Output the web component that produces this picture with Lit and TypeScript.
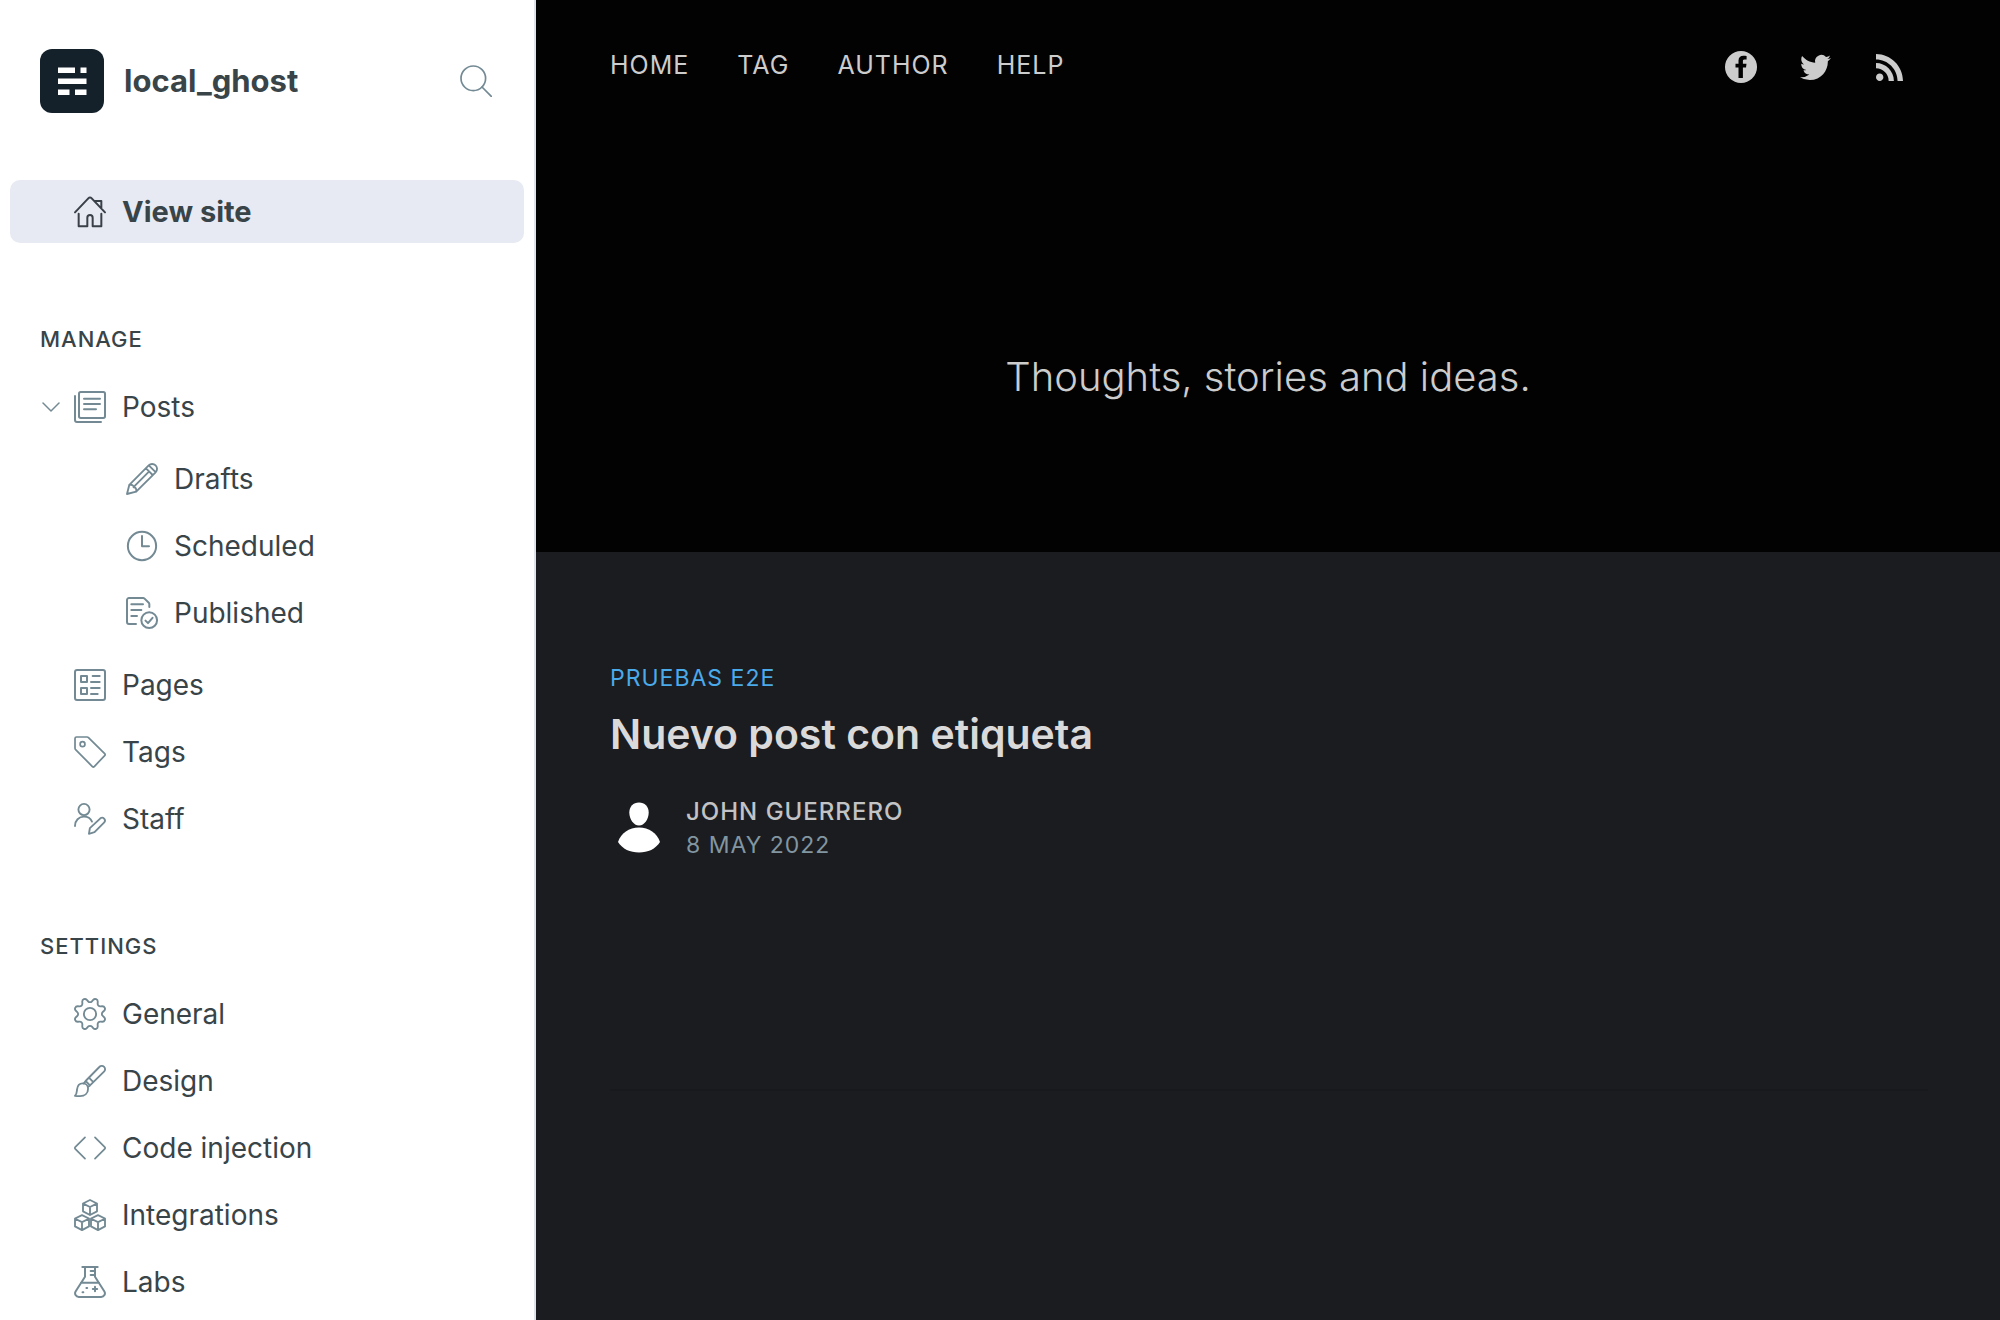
import { LitElement, html, svg, css, type SVGTemplateResult } from "lit";
import { customElement, property, state } from "lit/decorators.js";

const cube = (x: number, y: number) => svg`
  <path d="M12 .75l5.25 2.6v5.9L12 12l-5.25-2.75v-5.9zM6.9 3.5L12 6l5.1-2.5M12 6v6" transform="translate(${x} ${y})"/>`;

const ICONS: Record<string, SVGTemplateResult> = {
  home: svg`<path d="M.75 12.25L10.9 1.6a1.5 1.5 0 0 1 2.2 0l10.15 10.65M15.8 3.75h4.7v5M3.5 13.25v9.5H10v-6.5a2 2 0 0 1 4 0v6.5h6.5v-9.5"/>`,
  posts: svg`<rect x="3.75" y=".75" width="19.5" height="19.5" rx="1.3"/>
    <path d="M.75 3.75v18a1.5 1.5 0 0 0 1.5 1.5h18M7.5 5.75h12M7.5 9.75h12M7.5 13.75h9"/>`,
  drafts: svg`<g stroke-width="1.4"><path d="M22.2 1.8a3.64 3.64 0 0 0-5.2 0L2.5 16.35.75 23.25l6.9-1.75L22.2 7a3.64 3.64 0 0 0 0-5.2zM15 4l5 5M17.3 2l4.7 4.7M2.5 16.35c2.3-.2 3.3.4 3.2 1.9 1.5-.1 2.2 1 2 3.2M5.8 17.9L17.2 6.5"/></g>`,
  scheduled: svg`<circle cx="12" cy="12" r="10.6"/><path d="M12 4.5v7.75h5.25"/>`,
  published: svg`<path d="M7.5 20.25H2.25a1.5 1.5 0 0 1-1.5-1.5V2.25a1.5 1.5 0 0 1 1.5-1.5h10.6a1.5 1.5 0 0 1 1.06.44l3.15 3.15a1.5 1.5 0 0 1 .44 1.06V7.5M4 5.5h8.75M4 9.75h7.5M4 14.2h4.25"/>
    <circle cx="17.4" cy="17.4" r="5.9"/><path d="M14.6 17.7l1.9 1.9 3.4-4"/>`,
  pages: svg`<rect x=".75" y=".75" width="22.5" height="22.5" rx="1.5"/>
    <rect x="5.25" y="5.25" width="4.5" height="4.5"/><rect x="5.25" y="14.25" width="4.5" height="4.5"/>
    <path d="M14 5.25h5.25M12.75 9.75h6.5M12.75 14.25h6.5M12.75 18.75h5"/>`,
  tags: svg`<g stroke-width="1.3"><path d="M1.9.75h7.9a1.5 1.5 0 0 1 1.06.44L23 13.3a1 1 0 0 1 0 1.4L15.2 22.9a1 1 0 0 1-1.4 0L1.2 10.3a1.5 1.5 0 0 1-.44-1.06V1.9A1.15 1.15 0 0 1 1.9.75z"/>
    <circle cx="6.4" cy="6.1" r="1.8"/></g>`,
  staff: svg`<g stroke-width="1.4"><circle cx="7.5" cy="4.9" r="4.2"/><path d="M.75 17.25c0-4.2 2.9-7 6.75-7 2.7 0 4.9 1.3 6 3.7M15.4 21.9l-4.2 1.2.7-4.3 7.9-7.3a2.1 2.1 0 0 1 2.9 3z"/></g>`,
  general: svg`<g stroke-width="1.4"><path d="M10.546 2.438a1.957 1.957 0 0 0 2.908 0L14.4 1.4a1.959 1.959 0 0 1 3.41 1.413l-.071 1.4a1.958 1.958 0 0 0 2.051 2.053l1.4-.071A1.959 1.959 0 0 1 22.6 9.6l-1.042.94a1.96 1.96 0 0 0 0 2.909l1.042.94a1.959 1.959 0 0 1-1.413 3.41l-1.4-.071a1.958 1.958 0 0 0-2.056 2.056l.071 1.4A1.959 1.959 0 0 1 14.4 22.6l-.941-1.041a1.959 1.959 0 0 0-2.908 0L9.606 22.6A1.959 1.959 0 0 1 6.2 21.192l.072-1.4a1.958 1.958 0 0 0-2.056-2.056l-1.4.071A1.958 1.958 0 0 1 1.4 14.4l1.041-.94a1.96 1.96 0 0 0 0-2.909L1.4 9.606A1.958 1.958 0 0 1 2.809 6.2l1.4.071a1.958 1.958 0 0 0 2.06-2.06L6.2 2.81A1.959 1.959 0 0 1 9.606 1.4z"/>
    <circle cx="12" cy="12" r="4.6"/></g>`,
  design: svg`<g stroke-width="1.4"><path d="M22.6 1.4a2.5 2.5 0 0 0-3.6.1L8.7 12l3.3 3.3L22.5 5a2.5 2.5 0 0 0 .1-3.6zM11.2 9.5l3.3 3.3M8.7 12l-1.3 1.8M12 15.3l-1.6 1.2"/>
    <path d="M.75 23.1c1.4-1.2 1.3-2.7 1.5-4.6.3-2.9 2-4.7 4.3-4.7 2.3 0 4 1.7 4 4 0 3.3-2.5 5.5-6 5.5-1.3 0-2.7 0-3.8-.2z"/></g>`,
  code: svg`<g stroke-width="1.3"><path d="M8.25 4L.9 11.3a1 1 0 0 0 0 1.4L8.25 20M15.75 4l7.35 7.3a1 1 0 0 1 0 1.4L15.75 20"/></g>`,
  integrations: svg`<g stroke-width="1.4">${cube(0, 0)}${cube(-6, 11.3)}${cube(6, 11.3)}</g>`,
  labs: svg`<path d="M6.25.75h11.5M8.25.75V8L1.3 18.9a2.8 2.8 0 0 0 2.35 4.35h16.7a2.8 2.8 0 0 0 2.35-4.35L15.75 8V.75M5.2 12.5h13.6M15.75 3.75H12.5M15.75 6.75H12.5M15.75 15.6v3.3M14.1 17.25h3.3M9.3 16.5h.6M6.4 19.6h.6"/>`,
};

interface NavItem {
  label: string;
  icon: string;
  children?: NavItem[];
}

const MANAGE: NavItem[] = [
  {
    label: "Posts",
    icon: "posts",
    children: [
      { label: "Drafts", icon: "drafts" },
      { label: "Scheduled", icon: "scheduled" },
      { label: "Published", icon: "published" },
    ],
  },
  { label: "Pages", icon: "pages" },
  { label: "Tags", icon: "tags" },
  { label: "Staff", icon: "staff" },
];

const SETTINGS: NavItem[] = [
  { label: "General", icon: "general" },
  { label: "Design", icon: "design" },
  { label: "Code injection", icon: "code" },
  { label: "Integrations", icon: "integrations" },
  { label: "Labs", icon: "labs" },
];

@customElement("nav-icon")
export class NavIcon extends LitElement {
  @property() name = "";

  static styles = css`
    :host { display: block; flex: none; width: 32px; height: 32px; }
    .glyph {
      display: block; width: 100%; height: 100%; overflow: visible;
      fill: none; stroke: currentColor; stroke-linecap: round; stroke-linejoin: round;
    }
  `;

  render() {
    return html`<svg class="glyph" viewBox="0 0 24 24" stroke-width="1.5" aria-hidden="true">${ICONS[this.name]}</svg>`;
  }
}

@customElement("admin-sidebar")
export class AdminSidebar extends LitElement {
  @state() private expanded = true;

  static styles = css`
    :host {
      display: block; box-sizing: border-box; overflow: hidden;
      background: #fff; border-right: 2px solid #dfe3ea; color: #394449;
      font-family: Inter, "Liberation Sans", sans-serif; font-size: 28px; line-height: 32px;
    }
    .top { display: flex; align-items: center; gap: 20px; padding: 49px 42px 67px 40px; }
    .logo { flex: none; width: 64px; height: 64px; display: block; }
    .name { flex: 1; margin: 0; font-size: 31px; font-weight: 700; }
    .search, .toggle { padding: 0; border: 0; background: none; color: #738a94; cursor: pointer; }
    .line {
      display: block; fill: none; stroke: currentColor;
      stroke-linecap: round; stroke-linejoin: round;
    }
    .big { width: 32px; height: 32px; }
    .small { width: 18px; height: 10px; }
    .menu { padding: 0 10px; }
    .list { list-style: none; margin: 0; padding: 0; display: grid; gap: 4px; }
    .sub { padding: 5px 0; }
    .row { display: grid; grid-template-columns: 64px 1fr; height: 63px; border-radius: 10px; }
    .sub .row { grid-template-columns: 116px 1fr; }
    .toggle { display: flex; align-items: center; padding-left: 32px; }
    .link {
      grid-column: 2; display: flex; align-items: center; gap: 16px;
      color: inherit; text-decoration: none;
    }
    .link nav-icon { color: #738a94; }
    .active { background: #e7eaf2; font-size: 29px; font-weight: 700; }
    .active .link nav-icon { color: #394047; }
    .heading {
      margin: 82px 0 22px; padding: 0 30px;
      font-size: 22px; line-height: 28px; font-weight: 500; text-transform: uppercase; letter-spacing: 1px;
    }
  `;

  private renderItem(item: NavItem): unknown {
    return html`
      <li>
        <div class="row">
          ${item.children
            ? html`<button class="toggle" aria-label="Toggle posts" aria-expanded=${this.expanded}
                @click=${() => (this.expanded = !this.expanded)}>
                <svg class="line small" viewBox="0 0 18 10" stroke-width="1.5"><path d="M1 1l8 8 8-8"/></svg>
              </button>`
            : null}
          <a class="link" href="#"><nav-icon name=${item.icon}></nav-icon>${item.label}</a>
        </div>
      </li>
      ${item.children && this.expanded
        ? html`<li><ul class="list sub">${item.children.map((c) => this.renderItem(c))}</ul></li>`
        : null}
    `;
  }

  render() {
    return html`
      <header class="top">
        <svg class="logo" viewBox="0 0 64 64" aria-hidden="true">
          <rect width="64" height="64" rx="12" fill="#15212a"/>
          <path fill="#fff" d="M18 18.5h17V24H18zM40.5 18.5h6V24h-6zM18 29.5h28.5V35H18zM18 40.5h11.5V46H18zM35 40.5h11.5V46H35z"/>
        </svg>
        <h1 class="name">local_ghost</h1>
        <button class="search" aria-label="Search">
          <svg class="line big" viewBox="0 0 32 32" stroke-width="1.7"><circle cx="13.3" cy="13.3" r="12.3"/><path d="M22 22l9.3 9.3"/></svg>
        </button>
      </header>
      <nav class="menu">
        <div class="row active">
          <a class="link" href="#"><nav-icon name="home"></nav-icon>View site</a>
        </div>
        <h2 class="heading">Manage</h2>
        <ul class="list">${MANAGE.map((i) => this.renderItem(i))}</ul>
        <h2 class="heading">Settings</h2>
        <ul class="list">${SETTINGS.map((i) => this.renderItem(i))}</ul>
      </nav>
    `;
  }
}

@customElement("site-preview")
export class SitePreview extends LitElement {
  static styles = css`
    :host {
      display: block; background: #1b1c20; color: #ccc;
      font-family: Inter, "Liberation Sans", sans-serif; font-size: 23px; line-height: 32px;
    }
    .hero { display: flex; flex-direction: column; padding-bottom: 147px; background: #020202; }
    .bar { display: flex; justify-content: space-between; align-items: flex-start; padding: 49px 95px 0 74px; }
    .nav { display: flex; gap: 48px; font-size: 25px; letter-spacing: 1px; text-transform: uppercase; }
    .nav a, .social a { color: inherit; text-decoration: none; }
    .social { display: flex; gap: 42px; padding-top: 2px; }
    .social a { display: grid; place-items: center; width: 32px; height: 32px; }
    .fb { width: 32px; height: 32px; }
    .tw { width: 31px; height: 31px; }
    .rss { width: 27px; height: 27px; }
    .tagline { margin: 266px 0 0; text-align: center; font-size: 40px; line-height: 56px; font-weight: 300; }
    .feed { padding: 0 72px 0 74px; }
    .card { padding: 110px 0 228px; border-bottom: 2px solid #18191c; }
    .tag { color: #4aaaea; text-transform: uppercase; letter-spacing: 1px; }
    .title { margin: 14px 0 36px; font-size: 41px; line-height: 52px; font-weight: 600; color: #dadada; }
    .byline { display: flex; gap: 16px; align-items: center; text-transform: uppercase; letter-spacing: 1px; }
    .avatar { width: 60px; height: 60px; }
    .author { font-size: 24px; font-weight: 500; color: #c2c3c4; }
    .date { color: #8296a1; }
    .meta { display: grid; gap: 1px; }
  `;

  render() {
    return html`
      <header class="hero">
        <div class="bar">
          <nav class="nav">
            ${["Home", "Tag", "Author", "Help"].map((t) => html`<a href="#">${t}</a>`)}
          </nav>
          <div class="social">
            <a href="#" aria-label="Facebook"><svg class="fb" viewBox="0 0 32 32">
              <circle cx="16" cy="16" r="16" fill="currentColor"/>
              <path fill="#020202" d="M13.5 27V16.6h-3v-3.9h3V9.6c0-3.1 1.9-4.8 4.9-4.8 1.3 0 2.7.1 3.2.2v3.6h-2.1c-1.5 0-1.6.8-1.6 1.8v2.3h3.6l-.5 3.9h-3.1V27z"/>
            </svg></a>
            <a href="#" aria-label="Twitter"><svg class="tw" viewBox="0 0 24 24" fill="currentColor"><path d="M23.953 4.57a10 10 0 01-2.825.775 4.958 4.958 0 002.163-2.723c-.951.555-2.005.959-3.127 1.184a4.92 4.92 0 00-8.384 4.482C7.69 8.095 4.067 6.13 1.64 3.162a4.822 4.822 0 00-.666 2.475c0 1.71.87 3.213 2.188 4.096a4.904 4.904 0 01-2.228-.616v.06a4.923 4.923 0 003.946 4.827 4.996 4.996 0 01-2.212.085 4.936 4.936 0 004.604 3.417 9.867 9.867 0 01-6.102 2.105c-.39 0-.779-.023-1.17-.067a13.995 13.995 0 007.557 2.209c9.053 0 13.998-7.496 13.998-13.985 0-.21 0-.42-.015-.63A9.935 9.935 0 0024 4.59z"/></svg></a>
            <a href="#" aria-label="RSS"><svg class="rss" viewBox="0 0 24 24" fill="currentColor"><path d="M19.199 24C19.199 13.467 10.533 4.8 0 4.8V0c13.165 0 24 10.835 24 24h-4.801zM3.291 17.415c1.814 0 3.293 1.479 3.293 3.295 0 1.813-1.485 3.29-3.301 3.29C1.47 24 0 22.526 0 20.71s1.475-3.294 3.291-3.295zM15.909 24h-4.665c0-6.169-5.075-11.245-11.244-11.245V8.09c8.727 0 15.909 7.184 15.909 15.91z"/></svg></a>
          </div>
        </div>
        <p class="tagline">Thoughts, stories and ideas.</p>
      </header>
      <main class="feed">
        <article class="card">
          <div class="tag">Pruebas E2E</div>
          <h2 class="title">Nuevo post con etiqueta</h2>
          <div class="byline">
            <svg class="avatar" viewBox="0 0 60 60" fill="#fff" aria-hidden="true">
              <path d="M29 3.5c5.7 0 9.7 4 9.7 10 0 6.5-4.2 13-9.7 13s-9.7-6.5-9.7-13c0-6 4-10 9.7-10z"/>
              <path d="M29 28.5c10 0 18 5.5 21 14.5C45.5 50 38 53.5 29 53.5S12.5 50 8 43C11 34 19 28.5 29 28.5z"/>
            </svg>
            <div class="meta"><span class="author">John Guerrero</span><time class="date" datetime="2022-05-08">8 May 2022</time></div>
          </div>
        </article>
      </main>
    `;
  }
}

@customElement("app-root")
export class AppRoot extends LitElement {
  static styles = css`
    :host { display: grid; grid-template-columns: 536px 1fr; height: 100vh; overflow: hidden; }
  `;

  render() {
    return html`<admin-sidebar></admin-sidebar><site-preview></site-preview>`;
  }
}
